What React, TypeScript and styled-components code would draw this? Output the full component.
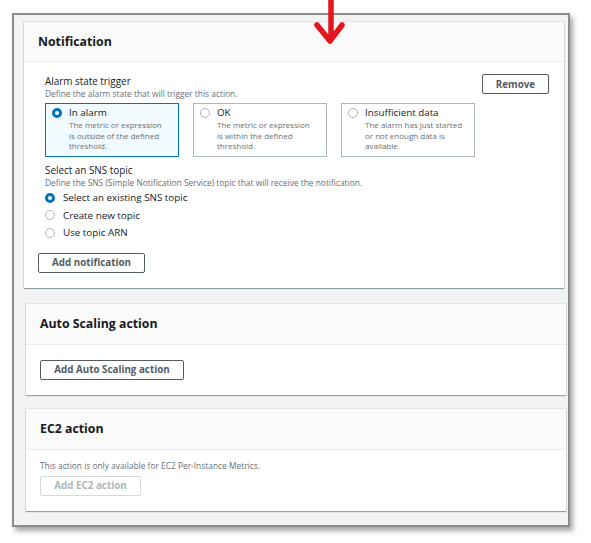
import React from "react";
import styled, { createGlobalStyle } from "styled-components";

const Global = createGlobalStyle`
  html, body { margin: 0; padding: 0; background: #ffffff; }
  body { font-family: "Open Sans", "Liberation Sans", sans-serif; color: #16191f; }
  * { box-sizing: border-box; }
`;

const Page = styled.div`
  position: relative;
  width: 591px;
  height: 543px;
  padding: 13px 0 0 12px;
`;

const Frame = styled.div`
  width: 558px;
  height: 514px;
  border: 2px solid #8c8c8c;
  background: #f2f3f3;
  box-shadow: 3px 4px 5px rgba(0, 0, 0, 0.35);
  padding: 7px 4px 0 10px;
  display: flex;
  flex-direction: column;
`;

const Card = styled.section<{ $shift?: number; $gap?: number }>`
  background: #ffffff;
  box-shadow: 0 1px 1px rgba(0, 28, 36, 0.35), 0 0 0 1px rgba(0, 28, 36, 0.06);
  margin-left: ${(p) => p.$shift ?? 0}px;
  margin-top: ${(p) => p.$gap ?? 0}px;
  width: 540px;
`;

const CardHeader = styled.div<{ $h: number }>`
  height: ${(p) => p.$h}px;
  background: #fafafa;
  border-bottom: 1px solid #eaeded;
  display: flex;
  align-items: center;
  padding-left: 14px;
`;

const Heading = styled.h2`
  margin: 0;
  font-size: 12.3px;
  font-weight: 700;
  color: #16191f;
`;

const CardBody = styled.div<{ $pad: string }>`
  padding: ${(p) => p.$pad};
  display: flex;
  flex-direction: column;
`;

const Section = styled.div`
  padding-left: 7px;
  display: flex;
  flex-direction: column;
`;

const TopRow = styled.div`
  display: flex;
  justify-content: space-between;
  align-items: flex-start;
`;

const Label = styled.div`
  font-size: 9.9px;
  line-height: 13px;
  font-weight: 500;
  color: #16191f;
`;

const Desc = styled.div`
  font-size: 8.4px;
  line-height: 12px;
  color: #687078;
`;

const Tiles = styled.div`
  display: flex;
  gap: 14px;
  margin-top: 3px;
`;

const Tile = styled.div<{ $on?: boolean }>`
  width: 134px;
  height: 54px;
  border: 1px solid ${(p) => (p.$on ? "#0073bb" : "#aab7b8")};
  background: ${(p) => (p.$on ? "#f1faff" : "#ffffff")};
  padding: 2px 6px 0 6px;
  display: flex;
  gap: 7px;
`;

const TileText = styled.div`
  display: flex;
  flex-direction: column;
`;

const TileTitle = styled.div`
  font-size: 9.8px;
  line-height: 14px;
  color: #16191f;
`;

const TileDesc = styled.div`
  font-size: 8px;
  line-height: 10.5px;
  color: #687078;
`;

const Radio = styled.span<{ $on?: boolean }>`
  flex: none;
  width: 10px;
  height: 10px;
  border-radius: 50%;
  margin-top: 2px;
  border: ${(p) => (p.$on ? "3px solid #0073bb" : "1px solid #aab7b8")};
  background: #ffffff;
`;

const RadioList = styled.div`
  display: flex;
  flex-direction: column;
`;

const RadioRow = styled.label`
  height: 17.5px;
  display: flex;
  align-items: center;
  gap: 8px;
  font-size: 9.8px;
  color: #16191f;
  & > span { margin-top: 0; }
`;

const Button = styled.button<{ $disabled?: boolean; $w: number }>`
  width: ${(p) => p.$w}px;
  height: 20px;
  background: #ffffff;
  border: 1px solid ${(p) => (p.$disabled ? "#d5dbdb" : "#545b64")};
  color: ${(p) => (p.$disabled ? "#aab7b8" : "#545b64")};
  font-family: inherit;
  font-size: 9.8px;
  font-weight: 700;
  padding: 0;
  border-radius: 2px;
  display: flex;
  align-items: center;
  justify-content: center;
`;

const SnsTitle = styled(Label)`
  margin-top: 7px;
`;

const ButtonWrap = styled.div<{ $mt: number }>`
  margin-top: ${(p) => p.$mt}px;
`;

const RemoveWrap = styled.div`
  margin-top: -1px;
`;

const Arrow = styled.svg`
  position: absolute;
  left: 310px;
  top: 0;
`;

export default function App() {
  return (
    <>
      <Global />
      <Page>
        <Frame>
          <Card>
            <CardHeader $h={40}>
              <Heading>Notification</Heading>
            </CardHeader>
            <CardBody $pad="13px 15px 15px 14px">
              <Section>
                <TopRow>
                  <div>
                    <Label>Alarm state trigger</Label>
                    <Desc>Define the alarm state that will trigger this action.</Desc>
                    <Tiles>
                      <Tile $on>
                        <Radio $on />
                        <TileText>
                          <TileTitle>In alarm</TileTitle>
                          <TileDesc>
                            The metric or expression
                            <br />
                            is outside of the defined
                            <br />
                            threshold.
                          </TileDesc>
                        </TileText>
                      </Tile>
                      <Tile>
                        <Radio />
                        <TileText>
                          <TileTitle>OK</TileTitle>
                          <TileDesc>
                            The metric or expression
                            <br />
                            is within the defined
                            <br />
                            threshold.
                          </TileDesc>
                        </TileText>
                      </Tile>
                      <Tile>
                        <Radio />
                        <TileText>
                          <TileTitle>Insufficient data</TileTitle>
                          <TileDesc>
                            The alarm has just started
                            <br />
                            or not enough data is
                            <br />
                            available.
                          </TileDesc>
                        </TileText>
                      </Tile>
                    </Tiles>
                  </div>
                  <RemoveWrap>
                    <Button $w={67}>Remove</Button>
                  </RemoveWrap>
                </TopRow>
                <SnsTitle>Select an SNS topic</SnsTitle>
                <Desc>Define the SNS (Simple Notification Service) topic that will receive the notification.</Desc>
                <RadioList>
                  <RadioRow>
                    <Radio $on />
                    Select an existing SNS topic
                  </RadioRow>
                  <RadioRow>
                    <Radio />
                    Create new topic
                  </RadioRow>
                  <RadioRow>
                    <Radio />
                    Use topic ARN
                  </RadioRow>
                </RadioList>
              </Section>
              <ButtonWrap $mt={11}>
                <Button $w={107}>Add notification</Button>
              </ButtonWrap>
            </CardBody>
          </Card>

          <Card $shift={2} $gap={16}>
            <CardHeader $h={41}>
              <Heading>Auto Scaling action</Heading>
            </CardHeader>
            <CardBody $pad="15px 14px 15px 14px">
              <Button $w={144}>Add Auto Scaling action</Button>
            </CardBody>
          </Card>

          <Card $shift={2} $gap={14}>
            <CardHeader $h={41}>
              <Heading>EC2 action</Heading>
            </CardHeader>
            <CardBody $pad="10px 14px 15px 14px">
              <Desc>This action is only available for EC2 Per-Instance Metrics.</Desc>
              <ButtonWrap $mt={4}>
                <Button $w={101} $disabled>
                  Add EC2 action
                </Button>
              </ButtonWrap>
            </CardBody>
          </Card>
        </Frame>
        <Arrow width="40" height="46" viewBox="0 0 40 46">
          <path
            d="M21 0 V36 M7 25 L20 41 L32 25"
            fill="none"
            stroke="#e3161d"
            strokeWidth="5.5"
            strokeLinecap="round"
            strokeLinejoin="round"
          />
        </Arrow>
      </Page>
    </>
  );
}
